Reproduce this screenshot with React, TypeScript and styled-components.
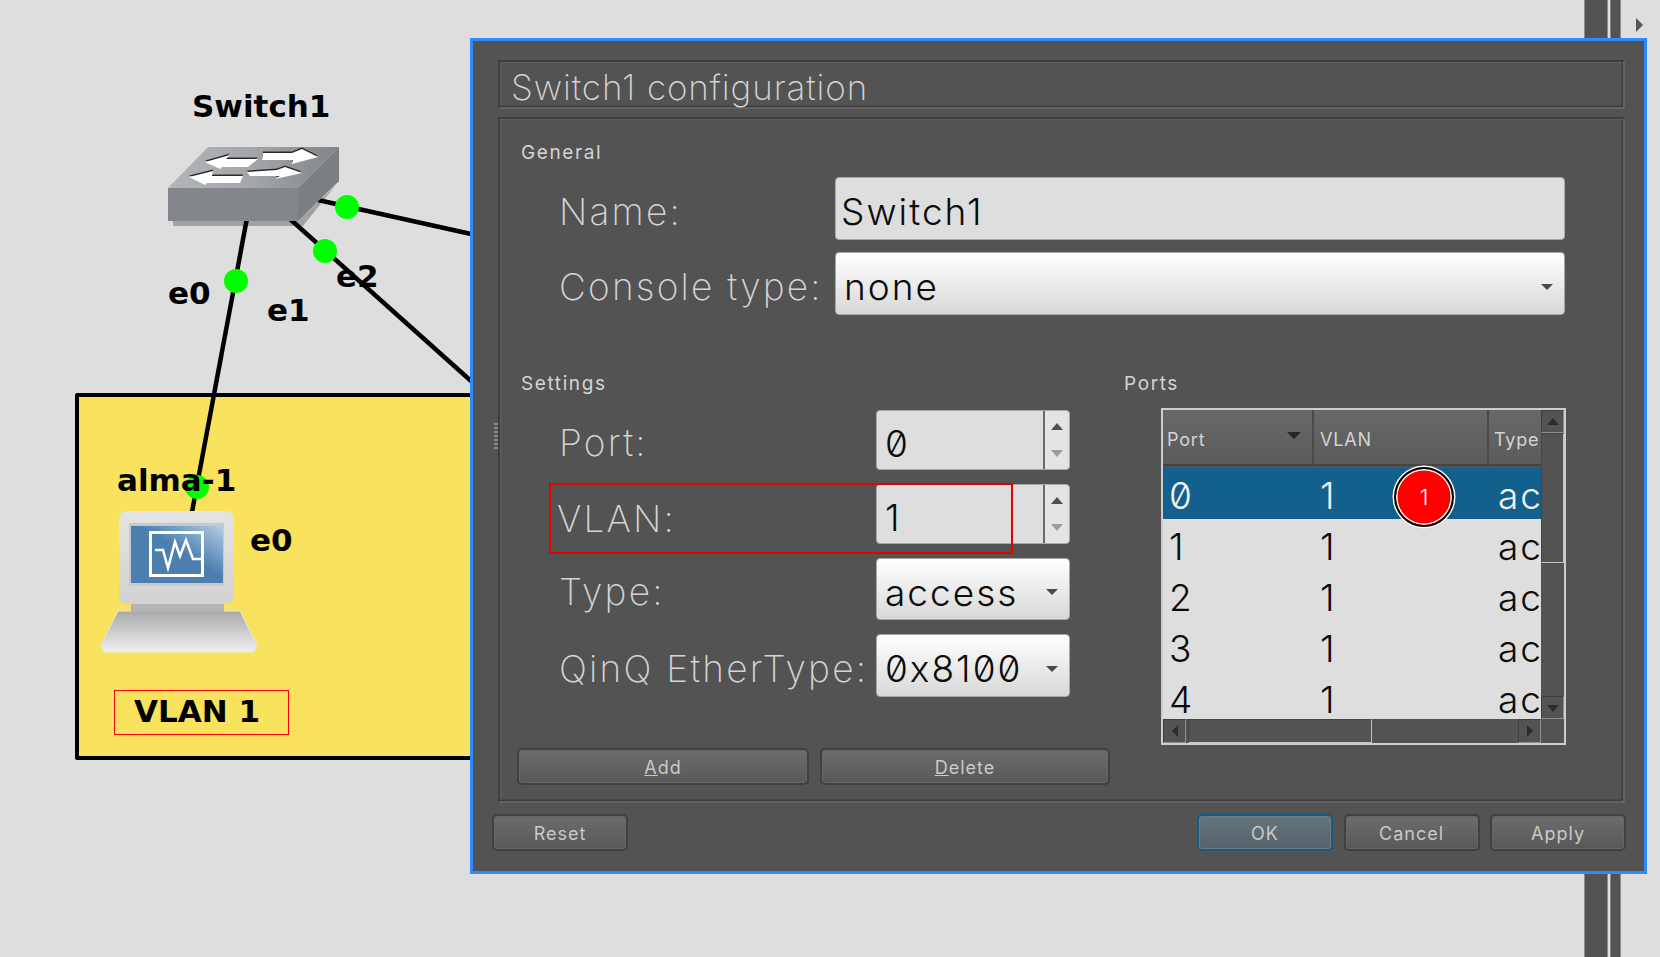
import { FC, ReactNode } from "react";
import styled, { createGlobalStyle } from "styled-components";

const UI_FONT = `"Inter", "Noto Sans", sans-serif`;
const CANVAS_FONT = `"DejaVu Sans", sans-serif`;

const GlobalStyle = createGlobalStyle`
    html, body {
        margin: 0;
        padding: 0;
        background: #dedede;
        overflow: hidden;
    }
    * {
        box-sizing: border-box;
    }
`;

const ROWS = ["0", "1", "2", "3", "4"];

const SWITCH_ARROWS = [
    "205,162 230,155 226,159 258,159 248,167 222,167 220,169",
    "263,153 292,153 302,149 318,157 292,164 293,160 262,160",
    "189,177 213,171 212,176 243,176 240,183 207,183 205,185",
    "247,172 277,170 285,167 302,173 275,179 280,176 250,176",
];

const NetworkDrawing: FC = () => <DrawingSvg viewBox="0 0 1660 957">
    <defs>
        <linearGradient id="switchTop" x1="0" y1="0" x2="1" y2="0">
            <stop offset="0" stopColor="#b3b6b9" />
            <stop offset="0.5" stopColor="#a3a6a9" />
            <stop offset="1" stopColor="#808488" />
        </linearGradient>
        <linearGradient id="monitorBody" x1="0" y1="0" x2="0" y2="1">
            <stop offset="0" stopColor="#e4e4e4" />
            <stop offset="1" stopColor="#d2d2d2" />
        </linearGradient>
        <linearGradient id="hostBase" x1="0" y1="0" x2="0" y2="1">
            <stop offset="0" stopColor="#a9a9a9" />
            <stop offset="1" stopColor="#f0f0f0" />
        </linearGradient>
        <linearGradient id="hostScreen" x1="0" y1="1" x2="1" y2="0">
            <stop offset="0.55" stopColor="#4c7fb0" />
            <stop offset="1" stopColor="#b4cde4" />
        </linearGradient>
    </defs>

    <polygon points="173,221 298,221 337,184 339,170 339,181 303,226 173,226" fill="#a2a2a2" />

    <g stroke="#000" strokeWidth="4.5" fill="none">
        <line x1="247" y1="218" x2="192" y2="512" />
        <line x1="290" y1="219" x2="480" y2="389" />
        <line x1="318" y1="200" x2="480" y2="236" />
    </g>

    <polygon points="208,147 339,147 298,188 168,188" fill="url(#switchTop)" />
    <polygon points="298,188 339,147 339,181 298,221" fill="#7b7f83" />
    <rect x="168" y="188" width="130" height="33" fill="#83878b" />
    <g fill="#2a2a2a" transform="translate(0 -1.5)">
        {SWITCH_ARROWS.map(points => <polygon key={points} points={points} />)}
    </g>
    <g fill="#fff">
        {SWITCH_ARROWS.map(points => <polygon key={points} points={points} />)}
    </g>

    <polygon
        points="118,611 240,611 257,645 254,652 104,652 101,645"
        fill="url(#hostBase)"
        stroke="#e6e6e6"
        strokeWidth="1"
    />
    <rect x="131" y="602" width="93" height="10" fill="#b4b4b4" />
    <rect x="119" y="511" width="115" height="93" rx="8" fill="url(#monitorBody)" />
    <rect x="129" y="523" width="95" height="63" fill="#c9c9c9" />
    <rect x="131" y="526" width="92" height="57" fill="url(#hostScreen)" />
    <rect x="150.500" y="532.500" width="52" height="43" fill="none" stroke="#fff" strokeWidth="3" />
    <polyline
        points="155,550 163,550 168,568 175,542 180,556 186,540 193,559 203,559"
        fill="none"
        stroke="#fff"
        strokeWidth="2.500"
    />

    <g fill="#00ff00">
        <circle cx="236" cy="281" r="12" />
        <circle cx="325" cy="251" r="12" />
        <circle cx="347" cy="207" r="12" />
        <circle cx="197" cy="487" r="12" />
    </g>
</DrawingSvg>;

const SpinArrows: FC = () => <SpinButtons>
    <svg width="14" height="40" viewBox="0 0 14 40">
        <polygon points="7,3 13,10 1,10" fill="#4f4f4f" />
        <polygon points="7,37 13,30 1,30" fill="#9c9c9c" />
    </svg>
</SpinButtons>;

const ComboArrow: FC = () => <svg width="14" height="8" viewBox="0 0 14 8">
    <polygon points="1,1 13,1 7,7" fill="#4a4a4a" />
</svg>;

const ScrollArrow: FC<{ dir: "up" | "down" | "left" | "right" }> = ({ dir }) => {
    const points = {
        up: "6,2 12,9 0,9",
        down: "0,3 12,3 6,10",
        left: "9,0 9,12 3,6",
        right: "3,0 3,12 9,6",
    }[dir];

    return <svg width="12" height="12" viewBox="0 0 12 12">
        <polygon points={points} fill="#2c2c2c" />
    </svg>;
};

const ActionButton: FC<{ children: ReactNode; primary?: boolean }> = ({ children, primary }) =>
    <Button $primary={primary}>{children}</Button>;

export default function App() {
    return <Canvas>
        <GlobalStyle />
        <VLine $x={1584} $w={24} />
        <VLine $x={1610} $w={11} />
        <Expander>
            <svg width="7" height="14" viewBox="0 0 7 14">
                <polygon points="0,0 7,7 0,14" fill="#555" />
            </svg>
        </Expander>

        <VlanArea />
        <NetworkDrawing />

        <NodeLabel $x={192} $y={87}>Switch1</NodeLabel>
        <NodeLabel $x={168} $y={274}>e0</NodeLabel>
        <NodeLabel $x={267} $y={291}>e1</NodeLabel>
        <NodeLabel $x={336} $y={257}>e2</NodeLabel>
        <NodeLabel $x={117} $y={461}>alma-1</NodeLabel>
        <NodeLabel $x={250} $y={521}>e0</NodeLabel>
        <VlanNote>VLAN 1</VlanNote>

        <Dialog>
            <TitleFrame>Switch1 configuration</TitleFrame>
            <MainFrame>
                <SplitHandle />
                <SectionLabel>General</SectionLabel>
                <GeneralForm>
                    <FieldLabel>Name:</FieldLabel>
                    <TextField>Switch1</TextField>
                    <FieldLabel>Console type:</FieldLabel>
                    <WideCombo>
                        <span>none</span>
                        <ComboArrow />
                    </WideCombo>
                </GeneralForm>

                <Columns>
                    <SettingsColumn>
                        <SectionLabel>Settings</SectionLabel>
                        <SettingsForm>
                            <FieldLabel>Port:</FieldLabel>
                            <SpinField>
                                <SpinValue>0</SpinValue>
                                <SpinArrows />
                            </SpinField>
                            <VlanRow>
                                <VlanLabel>VLAN:</VlanLabel>
                                <SpinField>
                                    <SpinValue>1</SpinValue>
                                    <SpinArrows />
                                </SpinField>
                                <Highlight />
                            </VlanRow>
                            <FieldLabel>Type:</FieldLabel>
                            <SmallCombo>
                                <span>access</span>
                                <ComboArrow />
                            </SmallCombo>
                            <FieldLabel>QinQ EtherType:</FieldLabel>
                            <SmallCombo $tall>
                                <span>0x8100</span>
                                <ComboArrow />
                            </SmallCombo>
                        </SettingsForm>
                        <FormButtons>
                            <ActionButton><u>A</u>dd</ActionButton>
                            <ActionButton><u>D</u>elete</ActionButton>
                        </FormButtons>
                    </SettingsColumn>

                    <PortsColumn>
                        <SectionLabel>Ports</SectionLabel>
                        <PortsTable>
                            <TableArea>
                                <HeaderRow>
                                    <HeaderCell>
                                        Port
                                        <SortArrow>
                                            <svg width="14" height="8" viewBox="0 0 14 8">
                                                <polygon points="0,0 14,0 7,7" fill="#262626" />
                                            </svg>
                                        </SortArrow>
                                    </HeaderCell>
                                    <HeaderCell>VLAN</HeaderCell>
                                    <HeaderCell>Type</HeaderCell>
                                </HeaderRow>
                                {ROWS.map((port, i) => <DataRow key={port} $selected={i === 0}>
                                    <DataCell>{port}</DataCell>
                                    <DataCell>1</DataCell>
                                    <DataCell>access</DataCell>
                                </DataRow>)}
                            </TableArea>
                            <VScroll>
                                <VScrollButton><ScrollArrow dir="up" /></VScrollButton>
                                <VScrollThumb />
                                <VScrollSpacer />
                                <VScrollButton><ScrollArrow dir="down" /></VScrollButton>
                            </VScroll>
                            <HScroll>
                                <HScrollButton><ScrollArrow dir="left" /></HScrollButton>
                                <HScrollThumb />
                                <HScrollSpacer />
                                <HScrollButton><ScrollArrow dir="right" /></HScrollButton>
                            </HScroll>
                            <ScrollCorner />
                            <StepBadge>1</StepBadge>
                        </PortsTable>
                    </PortsColumn>
                </Columns>
            </MainFrame>
            <Footer>
                <ActionButton>Reset</ActionButton>
                <FooterRight>
                    <ActionButton primary>OK</ActionButton>
                    <ActionButton>Cancel</ActionButton>
                    <ActionButton>Apply</ActionButton>
                </FooterRight>
            </Footer>
        </Dialog>
    </Canvas>;
}

const Canvas = styled.div`
    position: relative;
    width: 1660px;
    height: 957px;
    background: #dedede;
    overflow: hidden;
`;

const VLine = styled.div<{ $x: number; $w: number }>`
    position: absolute;
    top: 0;
    left: ${({ $x }) => $x}px;
    width: ${({ $w }) => $w}px;
    height: 957px;
    background: #535353;
    border-left: 1px solid #8c8c8c;
    border-right: 1px solid #8c8c8c;
`;

const Expander = styled.div`
    position: absolute;
    left: 1636px;
    top: 18px;
    display: flex;
`;

const VlanArea = styled.div`
    position: absolute;
    left: 75px;
    top: 393px;
    width: 500px;
    height: 367px;
    background: #f9e25d;
    border: 4px solid #000;
    border-radius: 2px;
`;

const DrawingSvg = styled.svg`
    position: absolute;
    left: 0;
    top: 0;
    width: 1660px;
    height: 957px;
`;

const NodeLabel = styled.div<{ $x: number; $y: number }>`
    position: absolute;
    left: ${({ $x }) => $x}px;
    top: ${({ $y }) => $y}px;
    font: bold 31px/38px ${CANVAS_FONT};
    color: #000;
    white-space: nowrap;
`;

const VlanNote = styled.div`
    position: absolute;
    left: 114px;
    top: 690px;
    width: 175px;
    height: 45px;
    padding-left: 19px;
    border: 1.500px solid #ff0000;
    font: bold 31px/41px ${CANVAS_FONT};
    color: #000;
`;

const Dialog = styled.div`
    position: absolute;
    left: 470px;
    top: 38px;
    width: 1177px;
    height: 836px;
    padding: 19px 19px 0 19px;
    background: #535353;
    border: 3px solid #2a8cff;
    display: flex;
    flex-flow: column nowrap;
    font-family: ${UI_FONT};
    font-weight: 300;
    color: #d4d4d4;
`;

const TitleFrame = styled.div`
    height: 49px;
    margin-left: 6px;
    padding-left: 11px;
    font-size: 35px;
    font-weight: 200;
    line-height: 51px;
    letter-spacing: 0.9px;
    border-style: solid;
    border-width: 2px;
    border-color: #3e3e3e #626262 #626262 #3e3e3e;
    box-shadow: inset -1.500px -1.500px 0 #3e3e3e, inset 1px 1px 0 #5e5e5e;
    white-space: nowrap;
`;

const MainFrame = styled.div`
    position: relative;
    height: 686px;
    margin: 8px 0 0 6px;
    padding: 24px 0 0 21px;
    border-style: solid;
    border-width: 2px;
    border-color: #3e3e3e #626262 #626262 #3e3e3e;
    box-shadow: inset -1.500px -1.500px 0 #3e3e3e, inset 1px 1px 0 #5e5e5e;
    display: flex;
    flex-flow: column nowrap;
`;

const SplitHandle = styled.div`
    position: absolute;
    left: -6px;
    top: 304px;
    width: 4px;
    height: 28px;
    background: repeating-linear-gradient(to bottom, #8e8e8e 0 2px, transparent 2px 4px);
`;

const SectionLabel = styled.div`
    height: 18px;
    font-size: 19px;
    font-weight: 400;
    line-height: 20px;
    letter-spacing: 1.6px;
    white-space: nowrap;
`;

const FieldLabel = styled.div`
    padding-top: 6px;
    font-size: 37px;
    font-weight: 200;
    line-height: 44px;
    letter-spacing: 2.2px;
    white-space: nowrap;
`;

const VlanLabel = styled(FieldLabel)`
    padding-top: 10px;
    margin-left: -2px;
`;

const GeneralForm = styled.div`
    display: grid;
    grid-template-columns: 276px 730px;
    grid-auto-rows: 63px;
    row-gap: 12px;
    align-items: center;
    margin: 16px 0 0 38px;
`;

const fieldBase = `
    display: flex;
    align-items: center;
    color: #0c0c0c;
    border: 1px solid #a8a8a8;
    border-radius: 4px;
    font-size: 37px;
    font-weight: 300;
    letter-spacing: 2px;
    font-feature-settings: "zero";
`;

const TextField = styled.div`
    ${fieldBase}
    height: 63px;
    padding: 6px 0 0 5px;
    background: #dedede;
`;

const WideCombo = styled.div`
    ${fieldBase}
    height: 63px;
    padding: 6px 10px 0 8px;
    justify-content: space-between;
    background: linear-gradient(to bottom, #ffffff, #d8d8d8);
`;

const Columns = styled.div`
    display: flex;
    flex-flow: row nowrap;
    margin-top: 59px;
`;

const SettingsColumn = styled.div`
    width: 603px;
    flex-shrink: 0;
    display: flex;
    flex-flow: column nowrap;
`;

const SettingsForm = styled.div`
    display: grid;
    grid-template-columns: 317px 194px;
    grid-template-rows: 60px 60px 62px 63px;
    row-gap: 14px;
    align-items: center;
    margin: 18px 0 0 38px;
`;

const VlanRow = styled.div`
    position: relative;
    grid-column: 1 / 3;
    display: grid;
    grid-template-columns: 317px 194px;
    align-items: center;
    height: 60px;
`;

const Highlight = styled.div`
    position: absolute;
    left: -10px;
    top: -1px;
    width: 464px;
    height: 71px;
    border: 2px solid #e60000;
    pointer-events: none;
`;

const SpinField = styled.div`
    ${fieldBase}
    height: 60px;
    padding-left: 8px;
    justify-content: space-between;
    background: #dedede;
`;

const SpinValue = styled.span`
    flex: 1;
    padding-top: 6px;
`;

const SpinButtons = styled.div`
    width: 26px;
    height: 100%;
    flex-shrink: 0;
    display: flex;
    align-items: center;
    justify-content: center;
    border-left: 2px solid #6a6a6a;
    border-radius: 0 4px 4px 0;
    background: #e4e4e4;
`;

const SmallCombo = styled.div<{ $tall?: boolean }>`
    ${fieldBase}
    height: ${({ $tall }) => $tall ? 63 : 62}px;
    padding: 6px 10px 0 8px;
    justify-content: space-between;
    background: linear-gradient(to bottom, #ffffff, #d8d8d8);
`;

const FormButtons = styled.div`
    display: grid;
    grid-template-columns: 292px 290px;
    column-gap: 11px;
    height: 37px;
    margin: 51px 0 0 -4px;
`;

const Button = styled.div<{ $primary?: boolean }>`
    height: 37px;
    padding-top: 2px;
    display: flex;
    align-items: center;
    justify-content: center;
    font-size: 18px;
    font-weight: 400;
    letter-spacing: 1px;
    color: #c9c9c9;
    border: 2px solid ${({ $primary }) => $primary ? "#1a5a80" : "#414141"};
    border-radius: 5px;
    background: ${({ $primary }) => $primary
        ? "linear-gradient(to bottom, #66747c, #55626a)"
        : "linear-gradient(to bottom, #6d6d6d, #585858)"};
    box-shadow: inset 0 0 0 1px ${({ $primary }) => $primary ? "#6d7b83" : "#666"};
`;

const PortsColumn = styled.div`
    display: flex;
    flex-flow: column nowrap;
`;

const PortsTable = styled.div`
    position: relative;
    width: 405px;
    height: 337px;
    margin: 16px 0 0 37px;
    border: 2px solid #cdcdcd;
    display: grid;
    grid-template-columns: 378px 23px;
    grid-template-rows: 309px 24px;
`;

const TableArea = styled.div`
    overflow: hidden;
    background: #dedede;
`;

const columns = `
    display: grid;
    grid-template-columns: 151px 175px 100px;
`;

const HeaderRow = styled.div`
    ${columns}
    height: 58px;
    background: #535353;
`;

const HeaderCell = styled.div`
    position: relative;
    height: 56px;
    padding: 18px 0 0 4px;
    font-size: 18px;
    font-weight: 400;
    line-height: 24px;
    letter-spacing: 0.8px;
    color: #d4d4d4;
    background: linear-gradient(to bottom, #686868, #5b5b5b);
    border-right: 2px solid #4a4a4a;
    border-bottom: 2px solid #444;
    white-space: nowrap;
    & + & {
        padding-left: 6px;
    }
    & + & + & {
        padding-left: 5px;
    }
`;

const SortArrow = styled.span`
    position: absolute;
    right: 11px;
    top: 22px;
    display: flex;
`;

const DataRow = styled.div<{ $selected?: boolean }>`
    ${columns}
    height: 51px;
    background: ${({ $selected }) => $selected ? "#14608c" : "transparent"};
    color: ${({ $selected }) => $selected ? "#f2f2f2" : "#0c0c0c"};
`;

const DataCell = styled.div`
    padding-left: 6px;
    font-size: 37px;
    font-weight: 300;
    line-height: 55px;
    letter-spacing: 2px;
    font-feature-settings: "zero";
    white-space: nowrap;
    overflow: hidden;
    & + & + & {
        padding-left: 9px;
    }
`;

const VScroll = styled.div`
    display: flex;
    flex-flow: column nowrap;
    background: #535353;
`;

const VScrollButton = styled.div`
    width: 23px;
    height: 23px;
    flex-shrink: 0;
    display: flex;
    align-items: center;
    justify-content: center;
    border: 1px solid #8f8f8f;
    border-top-color: #3f3f3f;
    border-left-color: #3f3f3f;
`;

const VScrollThumb = styled.div`
    height: 130px;
    flex-shrink: 0;
    border: 1px solid #c4c4c4;
    border-left-color: #444;
    border-top-color: #444;
`;

const VScrollSpacer = styled.div`
    flex: 1;
`;

const HScroll = styled.div`
    display: flex;
    flex-flow: row nowrap;
    background: #535353;
`;

const HScrollButton = styled.div`
    width: 23px;
    height: 24px;
    flex-shrink: 0;
    display: flex;
    align-items: center;
    justify-content: center;
    border: 1px solid #8f8f8f;
    border-top-color: #3f3f3f;
    border-left-color: #3f3f3f;
`;

const HScrollThumb = styled.div`
    width: 184px;
    margin-left: 2px;
    flex-shrink: 0;
    border: 1px solid #c4c4c4;
    border-left-color: #444;
    border-top-color: #444;
`;

const HScrollSpacer = styled.div`
    flex: 1;
`;

const ScrollCorner = styled.div`
    background: #535353;
`;

const StepBadge = styled.div`
    position: absolute;
    left: 231px;
    top: 57px;
    width: 60px;
    height: 60px;
    display: flex;
    align-items: center;
    justify-content: center;
    border-radius: 50%;
    background: #ff0000;
    border: 2.500px solid #000;
    box-shadow: 0 0 0 1.500px #fff, inset 0 0 0 1.500px #fff;
    color: #fff;
    font-family: ${UI_FONT};
    font-size: 22px;
    font-weight: 300;
`;

const Footer = styled.div`
    display: flex;
    flex-flow: row nowrap;
    justify-content: space-between;
    margin: 11px -1px 0 0;
    & > div:first-child {
        width: 136px;
    }
`;

const FooterRight = styled.div`
    display: grid;
    grid-template-columns: repeat(3, 136px);
    column-gap: 10.500px;
`;
